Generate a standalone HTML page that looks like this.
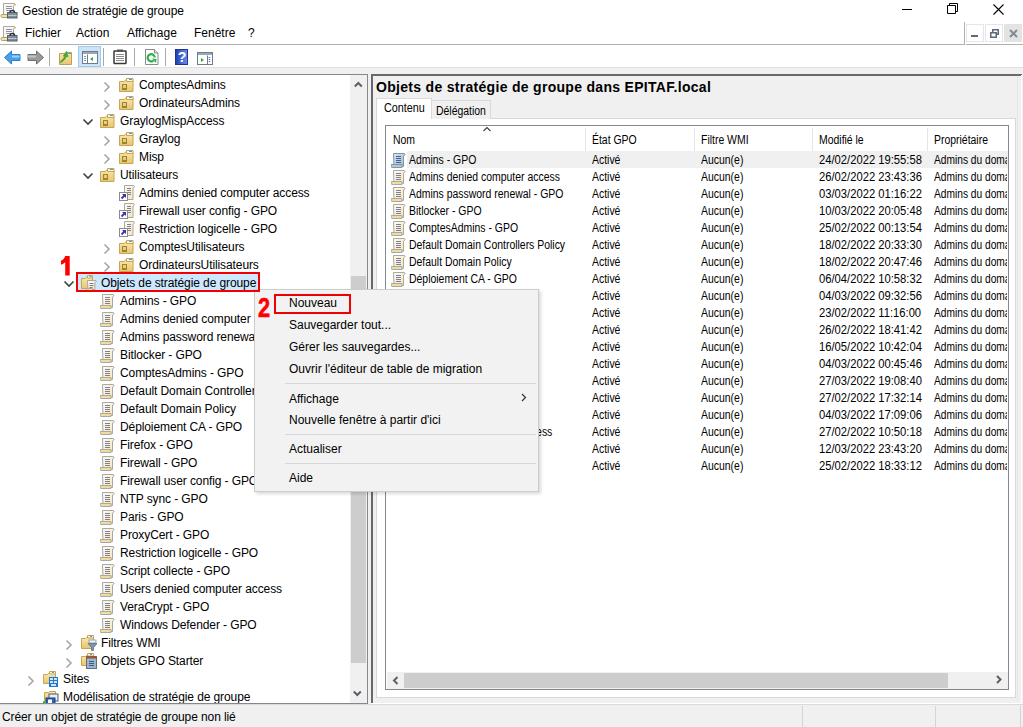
<!DOCTYPE html><html><head><meta charset="utf-8"><style>
*{margin:0;padding:0;box-sizing:border-box}
html,body{width:1023px;height:727px;overflow:hidden;background:#fff;font-family:"Liberation Sans",sans-serif;color:#000}
.ab{position:absolute}
.t12{font-size:12px;line-height:18px;white-space:nowrap}
.tr{letter-spacing:-0.1px}
.t11{font-size:11px;line-height:17px;white-space:nowrap}
.lv{position:absolute;font-size:12px;line-height:17px;white-space:nowrap;transform:scaleX(.87);transform-origin:0 0}
.lvd{position:absolute;font-size:12px;line-height:17px;white-space:nowrap;transform:scaleX(.935);transform-origin:0 0}
svg.i{position:absolute;width:16px;height:16px;overflow:visible}
</style></head><body>
<svg width="0" height="0" style="position:absolute"><defs>
<linearGradient id="fg" x1="0" y1="0" x2="0" y2="1"><stop offset="0" stop-color="#fbe7a8"/><stop offset="1" stop-color="#e9c46f"/></linearGradient>
<linearGradient id="sg" x1="0" y1="0" x2="1" y2="1"><stop offset="0" stop-color="#fffdf2"/><stop offset="1" stop-color="#f5e3a8"/></linearGradient>
<linearGradient id="bg2" x1="0" y1="0" x2="1" y2="1"><stop offset="0" stop-color="#d6e4ee"/><stop offset="1" stop-color="#9fb7c8"/></linearGradient>
<symbol id="ou" viewBox="0 0 16 16">
 <path d="M0.5 4.5h5l1-1.5h7.5v11.5h-13.5z" fill="url(#fg)" stroke="#c6a556"/>
 <path d="M7.5 1.5h6.5v3h-6.5z" fill="#fffbe8" stroke="#c6a556"/>
 <rect x="10" y="2" width="3" height="1" fill="#4d9be6"/>
 <rect x="3" y="7" width="5" height="6" fill="#a08428"/>
 <rect x="4" y="8" width="3" height="3" fill="#e0cf8a"/>
</symbol>
<symbol id="gpo" viewBox="0 0 16 16">
 <path d="M2.5 1.5h10.5c1 0 1.5 1.5 0.5 2l-1 0.5v10.5h-9.5z" fill="url(#sg)" stroke="#a8a8a8"/>
 <path d="M0.5 12.5h10.5v3h-10c-1.2 0-1.5-3 0-3z" fill="#f0dc9c" stroke="#a8a8a8"/>
 <path d="M5 4.5h5M5 6.5h5M5 8.5h5M5 10.5h5" stroke="#7c7ca8" stroke-width="1"/>
</symbol>
<symbol id="gpob" viewBox="0 0 16 16">
 <path d="M2.5 1.5h10.5c1 0 1.5 1.5 0.5 2l-1 0.5v10.5h-9.5z" fill="url(#bg2)" stroke="#7f98ab"/>
 <path d="M0.5 12.5h10.5v3h-10c-1.2 0-1.5-3 0-3z" fill="#b4c8d6" stroke="#7f98ab"/>
 <path d="M5 4.5h5M5 6.5h5M5 8.5h5M5 10.5h5" stroke="#4a5f9a" stroke-width="1"/>
</symbol>
<symbol id="gpol" viewBox="0 0 16 16">
 <path d="M5.5 0.5h9c1 0 1.5 1.5 0.5 2l-1 0.5v11.5h-8.5z" fill="url(#sg)" stroke="#a8a8a8"/>
 <path d="M8 3.5h4M8 5.5h4M8 7.5h4M8 9.5h4" stroke="#7c7ca8"/>
 <rect x="0.5" y="7.5" width="8" height="8" fill="#fff" stroke="#8c8c8c"/>
 <path d="M2.5 13.5l3.5-3.5" stroke="#3a34a8" stroke-width="1.8"/>
 <path d="M3 9h4v4z" fill="#3a34a8"/>
</symbol>
<symbol id="gpof" viewBox="0 0 16 16">
 <path d="M0.5 3.5h4l1-1h6v11h-11z" fill="url(#fg)" stroke="#c6a556"/>
 <path d="M6.5 0.5h5v2.5h-5z" fill="#fffbe8" stroke="#c6a556"/>
 <rect x="8.5" y="1" width="2" height="1" fill="#4d9be6"/>
 <path d="M6.5 5.5h8c0.8 0 1 1.2 0.4 1.5l-1 0.5v7h-7z" fill="url(#sg)" stroke="#a8a8a8"/>
 <path d="M8.5 8.5h4M8.5 10.5h4M8.5 12.5h3" stroke="#7c7ca8"/>
 <path d="M5.5 13.5h6v2h-5.5c-0.8 0-0.8-2 0-2z" fill="#f0dc9c" stroke="#a8a8a8"/>
</symbol>
<symbol id="wmi" viewBox="0 0 16 16">
 <path d="M0.5 3.5h4l1-1h7v11h-12z" fill="url(#fg)" stroke="#c6a556"/>
 <path d="M6.5 0.5h6v2.5h-6z" fill="#fffbe8" stroke="#c6a556"/>
 <rect x="9" y="1" width="2" height="1" fill="#4d9be6"/>
 <rect x="8" y="5" width="7" height="3" fill="#eef2f6" stroke="#8898a8" stroke-width="0.8"/>
 <path d="M7 8.5h9l-3.5 4v3h-2v-3z" fill="#7d95ad" stroke="#5d7185" stroke-width="0.8"/>
</symbol>
<symbol id="starter" viewBox="0 0 16 16">
 <path d="M0.5 3.5h4l1-1h7v10h-12z" fill="url(#fg)" stroke="#c6a556"/>
 <path d="M6.5 0.5h6v2.5h-6z" fill="#fffbe8" stroke="#c6a556"/>
 <rect x="9" y="1" width="2" height="1" fill="#4d9be6"/>
 <rect x="5.5" y="3.5" width="10" height="12" fill="#9bb5d0" stroke="#6b6b6b"/>
 <rect x="5.5" y="3.5" width="10" height="2" fill="#a0522d"/>
 <path d="M8 8.5h5M8 10.5h5M8 12.5h5" stroke="#3d5a80"/>
</symbol>
<symbol id="sites" viewBox="0 0 16 16">
 <path d="M0.5 3.5h4l1-1h7v10h-12z" fill="url(#fg)" stroke="#c6a556"/>
 <path d="M6.5 0.5h6v2.5h-6z" fill="#fffbe8" stroke="#c6a556"/>
 <rect x="9" y="1" width="2" height="1" fill="#4d9be6"/>
 <rect x="6" y="6" width="9" height="10" fill="#1f78d1"/>
 <path d="M7 7h3v2h-3zM11 7h3v2h-3zM7 10h3v2h-3zM11 10h3v2h-3zM8 13h5v2h-5z" fill="#cfe3f6"/>
</symbol>
<symbol id="model" viewBox="0 0 16 16">
 <path d="M1.5 3.5h4l1-1h6v9h-11z" fill="url(#fg)" stroke="#c6a556"/>
 <rect x="6" y="5" width="9" height="7" fill="#e6eef6" stroke="#505c6c"/>
 <rect x="3" y="9" width="9" height="7" fill="#2f5fb8" stroke="#1d3f80"/>
 <rect x="5" y="10.5" width="4" height="4" fill="#fff"/>
 <rect x="0" y="12" width="3" height="3" fill="#3ac23a"/>
</symbol>
<symbol id="chevr" viewBox="0 0 16 16"><path d="M4.5 5.5l4.5 4.5-4.5 4.5" fill="none" stroke="#a6a6a6" stroke-width="1.6"/></symbol>
<symbol id="chevd" viewBox="0 0 16 16"><path d="M2.5 6.5l4.5 4.5 4.5-4.5" fill="none" stroke="#404040" stroke-width="1.6"/></symbol>
</defs></svg>
<svg class="ab" style="left:0;top:0px" width="19" height="20" viewBox="0 0 19 20">
 <path d="M3.5 3.5h10.5c1.2 0 1.5 1.6 0.5 2l-1 0.4v9h-10z" fill="#fdf8e6" stroke="#a8a8a8"/>
 <path d="M14 3.5c1 0 1.8 1 1 2" fill="none" stroke="#c8a850"/>
 <path d="M6 6.5h6M6 8.5h6M6 10.5h4.5" stroke="#8a8ac0"/>
 <path d="M1.5 14.5h7v3h-6.5c-1.2 0-1.2-3-0.5-3z" fill="#f2e2a6" stroke="#b4a070"/>
 <rect x="7.5" y="12.5" width="9.5" height="5.5" fill="#7f8e9a" stroke="#56636e"/>
 <path d="M8 15.5h8.5" stroke="#c0cad2"/>
 <path d="M10 12.5a2.3 2 0 0 1 4.6 0" fill="none" stroke="#2a2a2a" stroke-width="1.3"/>
</svg>
<div class="ab t12" style="left:22px;top:2px;letter-spacing:-0.1px">Gestion de stratégie de groupe</div>
<div class="ab" style="left:902px;top:9px;width:10px;height:1px;background:#000"></div>
<svg class="ab" style="left:947px;top:3px" width="11" height="11" viewBox="0 0 11 11"><path d="M0.5 2.5h8v8h-8z M2.5 2.5v-2h8v8h-2" fill="none" stroke="#000"/></svg>
<svg class="ab" style="left:993px;top:4px" width="11" height="11" viewBox="0 0 11 11"><path d="M0.5 0.5l10 10M10.5 0.5l-10 10" stroke="#000" stroke-width="1.1"/></svg>
<svg class="ab" style="left:0;top:23px" width="19" height="20" viewBox="0 0 19 20">
 <path d="M3.5 3.5h10.5c1.2 0 1.5 1.6 0.5 2l-1 0.4v9h-10z" fill="#fdf8e6" stroke="#a8a8a8"/>
 <path d="M14 3.5c1 0 1.8 1 1 2" fill="none" stroke="#c8a850"/>
 <path d="M6 6.5h6M6 8.5h6M6 10.5h4.5" stroke="#8a8ac0"/>
 <path d="M1.5 14.5h7v3h-6.5c-1.2 0-1.2-3-0.5-3z" fill="#f2e2a6" stroke="#b4a070"/>
 <rect x="7.5" y="12.5" width="9.5" height="5.5" fill="#7f8e9a" stroke="#56636e"/>
 <path d="M8 15.5h8.5" stroke="#c0cad2"/>
 <path d="M10 12.5a2.3 2 0 0 1 4.6 0" fill="none" stroke="#2a2a2a" stroke-width="1.3"/>
</svg>
<div class="ab t12" style="left:25px;top:24px">Fichier</div>
<div class="ab t12" style="left:76px;top:24px">Action</div>
<div class="ab t12" style="left:127px;top:24px">Affichage</div>
<div class="ab t12" style="left:194px;top:24px">Fenêtre</div>
<div class="ab t12" style="left:248px;top:24px">?</div>
<div class="ab" style="left:0;top:44px;width:965px;height:1px;background:#b0b0b0"></div>
<div class="ab" style="left:964px;top:22px;width:1px;height:23px;background:#b0b0b0"></div>
<div class="ab" style="left:966px;top:44px;width:57px;height:1px;background:#b0b0b0"></div>
<div class="ab" style="left:966px;top:24px;width:18px;height:18px;border:1px solid #e6e6e6;background:#fff"></div>
<div class="ab" style="left:971px;top:35px;width:7px;height:2px;background:#5c6b7a"></div>
<div class="ab" style="left:985px;top:24px;width:18px;height:18px;border:1px solid #e6e6e6;background:#fff"></div>
<svg class="ab" style="left:990px;top:29px" width="9" height="9" viewBox="0 0 9 9"><path d="M0.75 3.75h5.5v4.5h-5.5z M2.75 3.5v-2.75h5.5v4.5h-2" fill="none" stroke="#5c6b7a" stroke-width="1.5"/></svg>
<div class="ab" style="left:1004px;top:24px;width:18px;height:18px;background:#e3e3e3"></div>
<svg class="ab" style="left:1009px;top:29px" width="9" height="9" viewBox="0 0 9 9"><path d="M1 1l7 7M8 1l-7 7" stroke="#7f8c98" stroke-width="2"/></svg>

<svg class="ab" style="left:4px;top:50px" width="17" height="15" viewBox="0 0 17 15"><path d="M0.5 7.5l7-6.5v3.5h8.5v6h-8.5v3.5z" fill="#4aa0e8" stroke="#2d7fcc"/><path d="M8 5.5h7.5v2h-7.5z" fill="#9fd0f8"/></svg>
<svg class="ab" style="left:27px;top:50px" width="17" height="15" viewBox="0 0 17 15"><path d="M16.5 7.5l-7-6.5v3.5h-8.5v6h8.5v3.5z" fill="#9a9a9a" stroke="#6e6e6e"/><path d="M1 5.5h8v2h-8z" fill="#c4c4c4"/></svg>
<div class="ab" style="left:49px;top:48px;width:1px;height:18px;background:#a8a8a8"></div>
<svg class="ab" style="left:58px;top:50px" width="16" height="16" viewBox="0 0 16 16"><path d="M1.5 3.5h6l1-1h5v12h-12z" fill="url(#fg)" stroke="#c0a050"/><rect x="10" y="3" width="3" height="1" fill="#4d9be6"/><path d="M2.5 11.5c1.5-1.5 3.5-3 4.5-5.5l-1.8 0.2 3.3-5 1.7 5.6-1.6-0.6c-1.2 3-3.5 5-6.1 6.3z" fill="#3fb03f" stroke="#2a8a2a" stroke-width="0.5"/></svg>
<div class="ab" style="left:78px;top:46px;width:23px;height:21px;background:#cce4f7;border:1px solid #99ccf0"></div>
<svg class="ab" style="left:82px;top:51px" width="16" height="13" viewBox="0 0 16 13"><rect x="0.5" y="0.5" width="15" height="12" fill="#fff" stroke="#6e7b88"/><rect x="1" y="1" width="14" height="2" fill="#9aa8b4"/><path d="M3 5v6" stroke="#3a78c8" stroke-width="1.5" stroke-dasharray="1 1"/><path d="M5.5 3.5v9" stroke="#6e7b88"/><path d="M11 6l-3 2 3 2z" fill="#2fae2f"/></svg>
<div class="ab" style="left:103px;top:48px;width:1px;height:18px;background:#a8a8a8"></div>
<svg class="ab" style="left:113px;top:49px" width="14" height="16" viewBox="0 0 14 16"><rect x="1" y="2" width="12" height="12.5" rx="0.5" fill="#fff" stroke="#3a3a3a" stroke-width="1.5"/><rect x="4" y="0.5" width="6" height="2.5" fill="#555"/><path d="M3 5.5h8M3 7.5h8M3 9.5h8M3 11.5h8" stroke="#8a8a8a" stroke-width="1"/></svg>
<div class="ab" style="left:134px;top:48px;width:1px;height:18px;background:#a8a8a8"></div>
<svg class="ab" style="left:145px;top:49px" width="14" height="16" viewBox="0 0 14 16"><path d="M0.5 0.5h9l3.5 3.5v11.5h-12.5z" fill="#fff" stroke="#8a8a8a"/><path d="M9.5 0.5v3.5h3.5" fill="#e8e8e8" stroke="#8a8a8a"/><path d="M9.8 8.5a3.6 3.6 0 1 0 -1.2 3" fill="none" stroke="#2fb04a" stroke-width="2.2"/><path d="M7 9.5l4.5 0.5-0.5 4z" fill="#2fb04a"/></svg>
<div class="ab" style="left:165px;top:48px;width:1px;height:18px;background:#a8a8a8"></div>
<svg class="ab" style="left:175px;top:49px" width="13" height="16" viewBox="0 0 13 16"><defs><linearGradient id="hg" x1="0" y1="0" x2="1" y2="0"><stop offset="0" stop-color="#1a3a9c"/><stop offset="0.3" stop-color="#3358c8"/><stop offset="1" stop-color="#6f90e8"/></linearGradient></defs><rect x="0" y="0" width="13" height="16" fill="url(#hg)"/><rect x="0.5" y="0.5" width="12" height="15" fill="none" stroke="#1d3590"/><text x="7" y="13" font-family="Liberation Sans" font-weight="bold" font-size="14" fill="#fff" text-anchor="middle">?</text></svg>
<svg class="ab" style="left:197px;top:52px" width="16" height="13" viewBox="0 0 16 13"><rect x="0.5" y="0.5" width="15" height="12" fill="#fff" stroke="#6e7b88"/><rect x="1" y="1" width="14" height="2" fill="#9aa8b4"/><path d="M12.5 5v6" stroke="#3a78c8" stroke-width="1.5" stroke-dasharray="1 1"/><path d="M10.5 3.5v9" stroke="#6e7b88"/><path d="M4 6l3 2-3 2z" fill="#2fae2f"/></svg>

<div class="ab" style="left:0;top:67px;width:1023px;height:1px;background:#e0e0e0"></div>
<div class="ab" style="left:0;top:68px;width:1023px;height:637px;background:#f0f0f0"></div>
<div class="ab" style="left:0;top:74px;width:368px;height:630px;background:#fff;border-top:1px solid #828790;border-right:1px solid #828790;border-bottom:1px solid #828790;overflow:hidden">
<div class="ab" style="left:350px;top:0;width:17px;height:629px;background:#f0f0f0"></div>
<div class="ab" style="left:351px;top:201px;width:15px;height:387px;background:#cdcdcd"></div>
<svg class="ab" style="left:353px;top:6px" width="11" height="8" viewBox="0 0 11 8"><path d="M1.8 5.5l3.5-3.5 3.5 3.5" fill="none" stroke="#606060" stroke-width="2"/></svg>
<svg class="ab" style="left:352px;top:615px" width="11" height="8" viewBox="0 0 11 8"><path d="M1.8 1.5l3.5 3.5 3.5-3.5" fill="none" stroke="#606060" stroke-width="2"/></svg>
<svg class="i" style="left:100px;top:2px"><use href="#chevr"/></svg>
<svg class="i" style="left:119px;top:2px"><use href="#ou"/></svg>
<div class="ab t12 tr" style="left:139px;top:1px">ComptesAdmins</div>
<svg class="i" style="left:100px;top:20px"><use href="#chevr"/></svg>
<svg class="i" style="left:119px;top:20px"><use href="#ou"/></svg>
<div class="ab t12 tr" style="left:139px;top:19px">OrdinateursAdmins</div>
<svg class="i" style="left:81px;top:38px"><use href="#chevd"/></svg>
<svg class="i" style="left:100px;top:38px"><use href="#ou"/></svg>
<div class="ab t12 tr" style="left:120px;top:37px">GraylogMispAccess</div>
<svg class="i" style="left:100px;top:56px"><use href="#chevr"/></svg>
<svg class="i" style="left:119px;top:56px"><use href="#ou"/></svg>
<div class="ab t12 tr" style="left:139px;top:55px">Graylog</div>
<svg class="i" style="left:100px;top:74px"><use href="#chevr"/></svg>
<svg class="i" style="left:119px;top:74px"><use href="#ou"/></svg>
<div class="ab t12 tr" style="left:139px;top:73px">Misp</div>
<svg class="i" style="left:81px;top:92px"><use href="#chevd"/></svg>
<svg class="i" style="left:100px;top:92px"><use href="#ou"/></svg>
<div class="ab t12 tr" style="left:120px;top:91px">Utilisateurs</div>
<svg class="i" style="left:119px;top:110px"><use href="#gpol"/></svg>
<div class="ab t12 tr" style="left:139px;top:109px">Admins denied computer access</div>
<svg class="i" style="left:119px;top:128px"><use href="#gpol"/></svg>
<div class="ab t12 tr" style="left:139px;top:127px">Firewall user config - GPO</div>
<svg class="i" style="left:119px;top:146px"><use href="#gpol"/></svg>
<div class="ab t12 tr" style="left:139px;top:145px">Restriction logicelle - GPO</div>
<svg class="i" style="left:100px;top:164px"><use href="#chevr"/></svg>
<svg class="i" style="left:119px;top:164px"><use href="#ou"/></svg>
<div class="ab t12 tr" style="left:139px;top:163px">ComptesUtilisateurs</div>
<svg class="i" style="left:100px;top:182px"><use href="#chevr"/></svg>
<svg class="i" style="left:119px;top:182px"><use href="#ou"/></svg>
<div class="ab t12 tr" style="left:139px;top:181px">OrdinateursUtilisateurs</div>
<div class="ab" style="left:78px;top:199px;width:180px;height:16px;background:#cce8ff"></div>
<svg class="i" style="left:62px;top:200px"><use href="#chevd"/></svg>
<svg class="i" style="left:81px;top:200px"><use href="#gpof"/></svg>
<div class="ab t12 tr" style="left:101px;top:199px">Objets de stratégie de groupe</div>
<svg class="i" style="left:100px;top:218px"><use href="#gpo"/></svg>
<div class="ab t12 tr" style="left:120px;top:217px">Admins - GPO</div>
<svg class="i" style="left:100px;top:236px"><use href="#gpo"/></svg>
<div class="ab t12 tr" style="left:120px;top:235px">Admins denied computer access</div>
<svg class="i" style="left:100px;top:254px"><use href="#gpo"/></svg>
<div class="ab t12 tr" style="left:120px;top:253px">Admins password renewal - GPO</div>
<svg class="i" style="left:100px;top:272px"><use href="#gpo"/></svg>
<div class="ab t12 tr" style="left:120px;top:271px">Bitlocker - GPO</div>
<svg class="i" style="left:100px;top:290px"><use href="#gpo"/></svg>
<div class="ab t12 tr" style="left:120px;top:289px">ComptesAdmins - GPO</div>
<svg class="i" style="left:100px;top:308px"><use href="#gpo"/></svg>
<div class="ab t12 tr" style="left:120px;top:307px">Default Domain Controllers Policy</div>
<svg class="i" style="left:100px;top:326px"><use href="#gpo"/></svg>
<div class="ab t12 tr" style="left:120px;top:325px">Default Domain Policy</div>
<svg class="i" style="left:100px;top:344px"><use href="#gpo"/></svg>
<div class="ab t12 tr" style="left:120px;top:343px">Déploiement CA - GPO</div>
<svg class="i" style="left:100px;top:362px"><use href="#gpo"/></svg>
<div class="ab t12 tr" style="left:120px;top:361px">Firefox - GPO</div>
<svg class="i" style="left:100px;top:380px"><use href="#gpo"/></svg>
<div class="ab t12 tr" style="left:120px;top:379px">Firewall - GPO</div>
<svg class="i" style="left:100px;top:398px"><use href="#gpo"/></svg>
<div class="ab t12 tr" style="left:120px;top:397px">Firewall user config - GPO</div>
<svg class="i" style="left:100px;top:416px"><use href="#gpo"/></svg>
<div class="ab t12 tr" style="left:120px;top:415px">NTP sync - GPO</div>
<svg class="i" style="left:100px;top:434px"><use href="#gpo"/></svg>
<div class="ab t12 tr" style="left:120px;top:433px">Paris - GPO</div>
<svg class="i" style="left:100px;top:452px"><use href="#gpo"/></svg>
<div class="ab t12 tr" style="left:120px;top:451px">ProxyCert - GPO</div>
<svg class="i" style="left:100px;top:470px"><use href="#gpo"/></svg>
<div class="ab t12 tr" style="left:120px;top:469px">Restriction logicelle - GPO</div>
<svg class="i" style="left:100px;top:488px"><use href="#gpo"/></svg>
<div class="ab t12 tr" style="left:120px;top:487px">Script collecte - GPO</div>
<svg class="i" style="left:100px;top:506px"><use href="#gpo"/></svg>
<div class="ab t12 tr" style="left:120px;top:505px">Users denied computer access</div>
<svg class="i" style="left:100px;top:524px"><use href="#gpo"/></svg>
<div class="ab t12 tr" style="left:120px;top:523px">VeraCrypt - GPO</div>
<svg class="i" style="left:100px;top:542px"><use href="#gpo"/></svg>
<div class="ab t12 tr" style="left:120px;top:541px">Windows Defender - GPO</div>
<svg class="i" style="left:62px;top:560px"><use href="#chevr"/></svg>
<svg class="i" style="left:81px;top:560px"><use href="#wmi"/></svg>
<div class="ab t12 tr" style="left:101px;top:559px">Filtres WMI</div>
<svg class="i" style="left:62px;top:578px"><use href="#chevr"/></svg>
<svg class="i" style="left:81px;top:578px"><use href="#starter"/></svg>
<div class="ab t12 tr" style="left:101px;top:577px">Objets GPO Starter</div>
<svg class="i" style="left:24px;top:596px"><use href="#chevr"/></svg>
<svg class="i" style="left:43px;top:596px"><use href="#sites"/></svg>
<div class="ab t12 tr" style="left:63px;top:595px">Sites</div>
<svg class="i" style="left:43px;top:614px"><use href="#model"/></svg>
<div class="ab t12 tr" style="left:63px;top:613px">Modélisation de stratégie de groupe</div>
</div>
<div class="ab" style="left:371px;top:74px;width:651px;height:629px;border-left:2px solid #696969;border-top:2px solid #696969;background:#f0f0f0"></div>
<div class="ab" style="left:371px;top:703px;width:652px;height:1px;background:#fff"></div>
<div class="ab" style="left:1021px;top:75px;width:1px;height:628px;background:#fff"></div>
<div class="ab" style="left:1022px;top:74px;width:1px;height:630px;background:#f0f0f0"></div>
<div class="ab" style="left:1017px;top:76px;width:1px;height:625px;background:#e6e6e6"></div>
<div class="ab" style="left:376px;top:77px;font:bold 14px/20px 'Liberation Sans',sans-serif;letter-spacing:0.3px;white-space:nowrap">Objets de stratégie de groupe dans EPITAF.local</div>
<div class="ab" style="left:376px;top:118px;width:640px;height:580px;background:#fff;border:1px solid #d9d9d9"></div>
<div class="ab" style="left:431px;top:100px;width:60px;height:19px;background:#f0f0f0;border:1px solid #d9d9d9;border-bottom:none"></div>
<div class="ab" style="left:376px;top:98px;width:56px;height:21px;background:#fff;border:1px solid #d9d9d9;border-bottom:none"></div>
<div class="lv" style="left:384px;top:99px;line-height:18px;transform:scaleX(.9)">Contenu</div>
<div class="lv" style="left:436px;top:102px;line-height:18px;transform:scaleX(.87)">Délégation</div>
<div class="ab" style="left:385px;top:125px;width:624px;height:565px;background:#fff;border:1px solid #828790;overflow:hidden">
<div class="ab" style="left:199px;top:2px;width:1px;height:24px;background:#e5e5e5"></div>
<div class="ab" style="left:308px;top:2px;width:1px;height:24px;background:#e5e5e5"></div>
<div class="ab" style="left:426px;top:2px;width:1px;height:24px;background:#e5e5e5"></div>
<div class="ab" style="left:541px;top:2px;width:1px;height:24px;background:#e5e5e5"></div>
<svg class="ab" style="left:97px;top:1px" width="8" height="5" viewBox="0 0 8 5"><path d="M0.5 4l3.5-3.5 3.5 3.5" fill="none" stroke="#3c3c3c" stroke-width="1.1"/></svg>
<div class="lv" style="left:7px;top:6px">Nom</div>
<div class="lv" style="left:206px;top:6px">État GPO</div>
<div class="lv" style="left:315px;top:6px">Filtre WMI</div>
<div class="lv" style="left:433px;top:6px">Modifié le</div>
<div class="lv" style="left:548px;top:6px">Propriétaire</div>
<div class="ab" style="left:21px;top:25px;width:610px;height:17px;background:#f0f0f0"></div>
<svg class="i" style="left:5px;top:26px"><use href="#gpob"/></svg>
<div class="lv" style="left:23px;top:26px">Admins - GPO</div>
<div class="lv" style="left:206px;top:26px">Activé</div>
<div class="lv" style="left:315px;top:26px">Aucun(e)</div>
<div class="lvd" style="left:433px;top:26px">24/02/2022 19:55:58</div>
<div class="ab" style="left:548px;top:25px;width:73px;height:17px;overflow:hidden"><div class="lv" style="left:0;top:1px;transform:scaleX(.85)">Admins du domaine</div></div>
<svg class="i" style="left:5px;top:43px"><use href="#gpo"/></svg>
<div class="lv" style="left:23px;top:43px">Admins denied computer access</div>
<div class="lv" style="left:206px;top:43px">Activé</div>
<div class="lv" style="left:315px;top:43px">Aucun(e)</div>
<div class="lvd" style="left:433px;top:43px">26/02/2022 23:43:36</div>
<div class="ab" style="left:548px;top:42px;width:73px;height:17px;overflow:hidden"><div class="lv" style="left:0;top:1px;transform:scaleX(.85)">Admins du domaine</div></div>
<svg class="i" style="left:5px;top:60px"><use href="#gpo"/></svg>
<div class="lv" style="left:23px;top:60px">Admins password renewal - GPO</div>
<div class="lv" style="left:206px;top:60px">Activé</div>
<div class="lv" style="left:315px;top:60px">Aucun(e)</div>
<div class="lvd" style="left:433px;top:60px">03/03/2022 01:16:22</div>
<div class="ab" style="left:548px;top:59px;width:73px;height:17px;overflow:hidden"><div class="lv" style="left:0;top:1px;transform:scaleX(.85)">Admins du domaine</div></div>
<svg class="i" style="left:5px;top:77px"><use href="#gpo"/></svg>
<div class="lv" style="left:23px;top:77px">Bitlocker - GPO</div>
<div class="lv" style="left:206px;top:77px">Activé</div>
<div class="lv" style="left:315px;top:77px">Aucun(e)</div>
<div class="lvd" style="left:433px;top:77px">10/03/2022 20:05:48</div>
<div class="ab" style="left:548px;top:76px;width:73px;height:17px;overflow:hidden"><div class="lv" style="left:0;top:1px;transform:scaleX(.85)">Admins du domaine</div></div>
<svg class="i" style="left:5px;top:94px"><use href="#gpo"/></svg>
<div class="lv" style="left:23px;top:94px">ComptesAdmins - GPO</div>
<div class="lv" style="left:206px;top:94px">Activé</div>
<div class="lv" style="left:315px;top:94px">Aucun(e)</div>
<div class="lvd" style="left:433px;top:94px">25/02/2022 00:13:54</div>
<div class="ab" style="left:548px;top:93px;width:73px;height:17px;overflow:hidden"><div class="lv" style="left:0;top:1px;transform:scaleX(.85)">Admins du domaine</div></div>
<svg class="i" style="left:5px;top:111px"><use href="#gpo"/></svg>
<div class="lv" style="left:23px;top:111px">Default Domain Controllers Policy</div>
<div class="lv" style="left:206px;top:111px">Activé</div>
<div class="lv" style="left:315px;top:111px">Aucun(e)</div>
<div class="lvd" style="left:433px;top:111px">18/02/2022 20:33:30</div>
<div class="ab" style="left:548px;top:110px;width:73px;height:17px;overflow:hidden"><div class="lv" style="left:0;top:1px;transform:scaleX(.85)">Admins du domaine</div></div>
<svg class="i" style="left:5px;top:128px"><use href="#gpo"/></svg>
<div class="lv" style="left:23px;top:128px">Default Domain Policy</div>
<div class="lv" style="left:206px;top:128px">Activé</div>
<div class="lv" style="left:315px;top:128px">Aucun(e)</div>
<div class="lvd" style="left:433px;top:128px">18/02/2022 20:47:46</div>
<div class="ab" style="left:548px;top:127px;width:73px;height:17px;overflow:hidden"><div class="lv" style="left:0;top:1px;transform:scaleX(.85)">Admins du domaine</div></div>
<svg class="i" style="left:5px;top:145px"><use href="#gpo"/></svg>
<div class="lv" style="left:23px;top:145px">Déploiement CA - GPO</div>
<div class="lv" style="left:206px;top:145px">Activé</div>
<div class="lv" style="left:315px;top:145px">Aucun(e)</div>
<div class="lvd" style="left:433px;top:145px">06/04/2022 10:58:32</div>
<div class="ab" style="left:548px;top:144px;width:73px;height:17px;overflow:hidden"><div class="lv" style="left:0;top:1px;transform:scaleX(.85)">Admins du domaine</div></div>
<svg class="i" style="left:5px;top:162px"><use href="#gpo"/></svg>
<div class="lv" style="left:23px;top:162px">Firefox - GPO</div>
<div class="lv" style="left:206px;top:162px">Activé</div>
<div class="lv" style="left:315px;top:162px">Aucun(e)</div>
<div class="lvd" style="left:433px;top:162px">04/03/2022 09:32:56</div>
<div class="ab" style="left:548px;top:161px;width:73px;height:17px;overflow:hidden"><div class="lv" style="left:0;top:1px;transform:scaleX(.85)">Admins du domaine</div></div>
<svg class="i" style="left:5px;top:179px"><use href="#gpo"/></svg>
<div class="lv" style="left:23px;top:179px">Firewall - GPO</div>
<div class="lv" style="left:206px;top:179px">Activé</div>
<div class="lv" style="left:315px;top:179px">Aucun(e)</div>
<div class="lvd" style="left:433px;top:179px">23/02/2022 11:16:00</div>
<div class="ab" style="left:548px;top:178px;width:73px;height:17px;overflow:hidden"><div class="lv" style="left:0;top:1px;transform:scaleX(.85)">Admins du domaine</div></div>
<svg class="i" style="left:5px;top:196px"><use href="#gpo"/></svg>
<div class="lv" style="left:23px;top:196px">Firewall user config - GPO</div>
<div class="lv" style="left:206px;top:196px">Activé</div>
<div class="lv" style="left:315px;top:196px">Aucun(e)</div>
<div class="lvd" style="left:433px;top:196px">26/02/2022 18:41:42</div>
<div class="ab" style="left:548px;top:195px;width:73px;height:17px;overflow:hidden"><div class="lv" style="left:0;top:1px;transform:scaleX(.85)">Admins du domaine</div></div>
<svg class="i" style="left:5px;top:213px"><use href="#gpo"/></svg>
<div class="lv" style="left:23px;top:213px">NTP sync - GPO</div>
<div class="lv" style="left:206px;top:213px">Activé</div>
<div class="lv" style="left:315px;top:213px">Aucun(e)</div>
<div class="lvd" style="left:433px;top:213px">16/05/2022 10:42:04</div>
<div class="ab" style="left:548px;top:212px;width:73px;height:17px;overflow:hidden"><div class="lv" style="left:0;top:1px;transform:scaleX(.85)">Admins du domaine</div></div>
<svg class="i" style="left:5px;top:230px"><use href="#gpo"/></svg>
<div class="lv" style="left:23px;top:230px">Paris - GPO</div>
<div class="lv" style="left:206px;top:230px">Activé</div>
<div class="lv" style="left:315px;top:230px">Aucun(e)</div>
<div class="lvd" style="left:433px;top:230px">04/03/2022 00:45:46</div>
<div class="ab" style="left:548px;top:229px;width:73px;height:17px;overflow:hidden"><div class="lv" style="left:0;top:1px;transform:scaleX(.85)">Admins du domaine</div></div>
<svg class="i" style="left:5px;top:247px"><use href="#gpo"/></svg>
<div class="lv" style="left:23px;top:247px">ProxyCert - GPO</div>
<div class="lv" style="left:206px;top:247px">Activé</div>
<div class="lv" style="left:315px;top:247px">Aucun(e)</div>
<div class="lvd" style="left:433px;top:247px">27/03/2022 19:08:40</div>
<div class="ab" style="left:548px;top:246px;width:73px;height:17px;overflow:hidden"><div class="lv" style="left:0;top:1px;transform:scaleX(.85)">Admins du domaine</div></div>
<svg class="i" style="left:5px;top:264px"><use href="#gpo"/></svg>
<div class="lv" style="left:23px;top:264px">Restriction logicelle - GPO</div>
<div class="lv" style="left:206px;top:264px">Activé</div>
<div class="lv" style="left:315px;top:264px">Aucun(e)</div>
<div class="lvd" style="left:433px;top:264px">27/02/2022 17:32:14</div>
<div class="ab" style="left:548px;top:263px;width:73px;height:17px;overflow:hidden"><div class="lv" style="left:0;top:1px;transform:scaleX(.85)">Admins du domaine</div></div>
<svg class="i" style="left:5px;top:281px"><use href="#gpo"/></svg>
<div class="lv" style="left:23px;top:281px">Script collecte - GPO</div>
<div class="lv" style="left:206px;top:281px">Activé</div>
<div class="lv" style="left:315px;top:281px">Aucun(e)</div>
<div class="lvd" style="left:433px;top:281px">04/03/2022 17:09:06</div>
<div class="ab" style="left:548px;top:280px;width:73px;height:17px;overflow:hidden"><div class="lv" style="left:0;top:1px;transform:scaleX(.85)">Admins du domaine</div></div>
<svg class="i" style="left:5px;top:298px"><use href="#gpo"/></svg>
<div class="lv" style="left:23px;top:298px">Users denied computer access</div>
<div class="lv" style="left:206px;top:298px">Activé</div>
<div class="lv" style="left:315px;top:298px">Aucun(e)</div>
<div class="lvd" style="left:433px;top:298px">27/02/2022 10:50:18</div>
<div class="ab" style="left:548px;top:297px;width:73px;height:17px;overflow:hidden"><div class="lv" style="left:0;top:1px;transform:scaleX(.85)">Admins du domaine</div></div>
<svg class="i" style="left:5px;top:315px"><use href="#gpo"/></svg>
<div class="lv" style="left:23px;top:315px">VeraCrypt - GPO</div>
<div class="lv" style="left:206px;top:315px">Activé</div>
<div class="lv" style="left:315px;top:315px">Aucun(e)</div>
<div class="lvd" style="left:433px;top:315px">12/03/2022 23:43:20</div>
<div class="ab" style="left:548px;top:314px;width:73px;height:17px;overflow:hidden"><div class="lv" style="left:0;top:1px;transform:scaleX(.85)">Admins du domaine</div></div>
<svg class="i" style="left:5px;top:332px"><use href="#gpo"/></svg>
<div class="lv" style="left:23px;top:332px">Windows Defender - GPO</div>
<div class="lv" style="left:206px;top:332px">Activé</div>
<div class="lv" style="left:315px;top:332px">Aucun(e)</div>
<div class="lvd" style="left:433px;top:332px">25/02/2022 18:33:12</div>
<div class="ab" style="left:548px;top:331px;width:73px;height:17px;overflow:hidden"><div class="lv" style="left:0;top:1px;transform:scaleX(.85)">Admins du domaine</div></div>
<div class="ab" style="left:1px;top:546px;width:621px;height:17px;background:#f0f0f0"></div>
<div class="ab" style="left:18px;top:547px;width:544px;height:15px;background:#cdcdcd"></div>
<svg class="ab" style="left:6px;top:549px" width="8" height="11" viewBox="0 0 8 11"><path d="M5.5 2l-3.5 3.5 3.5 3.5" fill="none" stroke="#606060" stroke-width="2"/></svg>
<svg class="ab" style="left:609px;top:548px" width="8" height="11" viewBox="0 0 8 11"><path d="M2 2l3.5 3.5-3.5 3.5" fill="none" stroke="#606060" stroke-width="2"/></svg>
</div>
<div class="ab" style="left:254px;top:289px;width:285px;height:203px;background:#f2f2f2;border:1px solid #cccccc;box-shadow:2px 2px 3px rgba(0,0,0,0.15)"></div>
<div class="ab t12" style="left:289px;top:294px">Nouveau</div>
<div class="ab t12" style="left:289px;top:316px">Sauvegarder tout...</div>
<div class="ab t12" style="left:289px;top:338px">Gérer les sauvegardes...</div>
<div class="ab t12" style="left:289px;top:360px">Ouvrir l'éditeur de table de migration</div>
<div class="ab t12" style="left:289px;top:390px">Affichage</div>
<div class="ab t12" style="left:289px;top:411px">Nouvelle fenêtre à partir d'ici</div>
<div class="ab t12" style="left:289px;top:440px">Actualiser</div>
<div class="ab t12" style="left:289px;top:469px">Aide</div>
<div class="ab" style="left:285px;top:383px;width:251px;height:1px;background:#d7d7d7"></div>
<div class="ab" style="left:285px;top:434px;width:251px;height:1px;background:#d7d7d7"></div>
<div class="ab" style="left:285px;top:463px;width:251px;height:1px;background:#d7d7d7"></div>
<svg class="ab" style="left:521px;top:393px" width="6" height="9" viewBox="0 0 6 9"><path d="M1 1l3.5 3.5-3.5 3.5" fill="none" stroke="#333" stroke-width="1.2"/></svg>
<div class="ab" style="left:274px;top:294px;width:77px;height:20px;border:2px solid #f00000"></div>
<div class="ab" style="left:258px;top:293px;font:bold 28px/30px 'Liberation Sans',sans-serif;color:#ff0000;transform:scaleX(0.78);transform-origin:left top;-webkit-text-stroke:0.6px #ff0000">2</div>
<div class="ab" style="left:76px;top:272px;width:184px;height:20px;border:2px solid #f00000"></div>
<svg class="ab" style="left:60px;top:255px" width="11" height="21" viewBox="0 0 11 21"><path d="M5.2 1h4.5v19.5h-4.5v-13.2c-1.1 1-2.6 1.9-4.2 2.4v-3.9c2-0.7 3.4-2.2 4.2-4.8z" fill="#ff0000"/></svg>
<div class="ab" style="left:0;top:704px;width:1023px;height:1px;background:#dadada"></div>
<div class="ab" style="left:0;top:705px;width:1023px;height:22px;background:#f0f0f0"></div>
<div class="ab t12" style="left:2px;top:708px;letter-spacing:-0.1px">Créer un objet de stratégie de groupe non lié</div>
<div class="ab" style="left:802px;top:706px;width:1px;height:21px;background:#d4d4d4"></div>
<div class="ab" style="left:935px;top:706px;width:1px;height:21px;background:#d4d4d4"></div>
<div class="ab" style="left:1020px;top:706px;width:1px;height:21px;background:#d4d4d4"></div>
</body></html>
